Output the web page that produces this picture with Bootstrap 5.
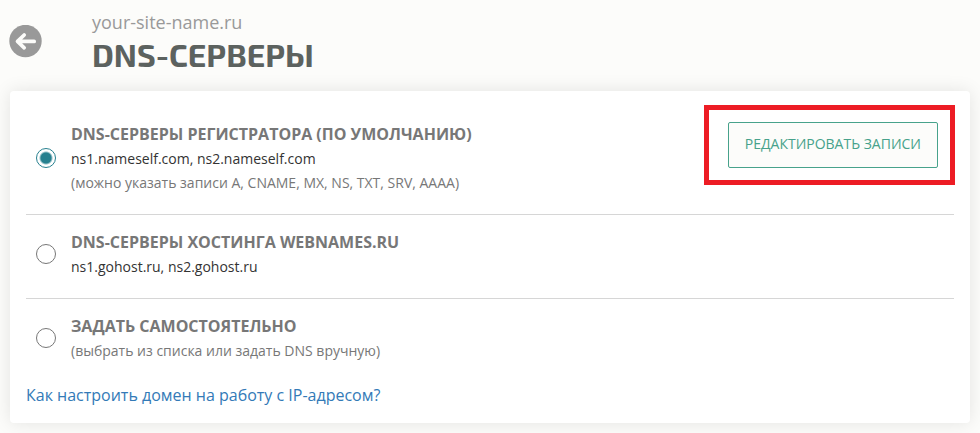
<!DOCTYPE html>
<html lang="ru">
<head>
<meta charset="utf-8">
<meta name="viewport" content="width=device-width, initial-scale=1">
<title>DNS-серверы</title>
<link href="https://cdn.jsdelivr.net/npm/bootstrap@5.3.0/dist/css/bootstrap.min.css" rel="stylesheet">
<style>
body { font-family: "Open Sans", "Noto Sans", sans-serif; font-size: 14px; line-height: 24px; color: #333; background: #fcfcfa; }
.page-head { padding: 10px 9px 17px; gap: 50px; }
.back-link { margin-top: 15px; }
.site-name { font-size: 18px; color: #999; }
.page-title { font-family: "Exo 2", Roboto, sans-serif; font-size: 32px; line-height: 40px; font-weight: 700; color: #5c625f; }
.dns-panel { margin: 0 10px 10px; padding: 16px; border-radius: 4px; box-shadow: 0 0 18px rgba(0, 0, 0, .1); }
.dns-option { padding: 15px 16px 19px 10px; border-bottom: 1px solid #d6d6d6; }
.dns-option:last-of-type { padding-bottom: 20px; border-bottom: 0; }
.dns-option .form-check-input { width: 20px; height: 20px; margin: 0 0 2px; border: 1px solid #777; background: #fff; }
.dns-option .form-check-input:checked { border-color: #26808f; background: radial-gradient(circle, #26808f 5px, #fff 7px); }
.dns-label { gap: 15px; cursor: pointer; }
.option-title { font-size: 16px; font-weight: 700; color: #777; margin-bottom: 1px; }
.option-note { color: #777; }
.btn-edit { padding: 9px 16px 11px; font-size: 14px; line-height: 24px; color: #47a28b; border: 1px solid #47a28b; border-radius: 2px; background: #fcfcfa; }
.btn-edit:hover { color: #fff; background: #47a28b; border-color: #47a28b; }
.highlight::after { content: ""; position: absolute; inset: -17px -17px -17px -24px; border: 5px solid #ed1c24; pointer-events: none; }
.help-link { font-size: 16px; color: #337ab7; }
</style>
</head>
<body>
<header class="page-head d-flex align-items-start">
  <a class="back-link d-flex" href="#" aria-label="Назад">
    <svg width="33" height="33" viewBox="0 0 33 33" aria-hidden="true"><circle cx="16.5" cy="16" r="16.200" fill="#999"/><path d="M15.200 10L8.500 16.400l6.700 6.400M9 16.400h16.200" fill="none" stroke="#fcfcfa" stroke-width="3.700" stroke-linecap="round" stroke-linejoin="round"/></svg>
  </a>
  <div>
    <div class="site-name">your-site-name.ru</div>
    <h1 class="page-title mb-0">DNS-СЕРВЕРЫ</h1>
  </div>
</header>
<main class="dns-panel bg-white">
  <form>
    <div class="dns-option d-flex align-items-start justify-content-between">
      <label class="dns-label d-flex align-items-center" for="dns-registrar">
        <input class="form-check-input flex-shrink-0" type="radio" name="dns" id="dns-registrar" checked>
        <span>
          <span class="option-title d-block">DNS-СЕРВЕРЫ РЕГИСТРАТОРА (ПО УМОЛЧАНИЮ)</span>
          <span class="d-block">ns1.nameself.com, ns2.nameself.com</span>
          <span class="option-note d-block">(можно указать записи A, CNAME, MX, NS, TXT, SRV, AAAA)</span>
        </span>
      </label>
      <div class="highlight position-relative flex-shrink-0">
        <button class="btn btn-edit" type="button">РЕДАКТИРОВАТЬ ЗАПИСИ</button>
      </div>
    </div>
    <div class="dns-option d-flex">
      <label class="dns-label d-flex align-items-center" for="dns-hosting">
        <input class="form-check-input flex-shrink-0" type="radio" name="dns" id="dns-hosting">
        <span>
          <span class="option-title d-block">DNS-СЕРВЕРЫ ХОСТИНГА WEBNAMES.RU</span>
          <span class="d-block">ns1.gohost.ru, ns2.gohost.ru</span>
        </span>
      </label>
    </div>
    <div class="dns-option d-flex">
      <label class="dns-label d-flex align-items-center" for="dns-custom">
        <input class="form-check-input flex-shrink-0" type="radio" name="dns" id="dns-custom">
        <span>
          <span class="option-title d-block">ЗАДАТЬ САМОСТОЯТЕЛЬНО</span>
          <span class="option-note d-block">(выбрать из списка или задать DNS вручную)</span>
        </span>
      </label>
    </div>
  </form>
  <a class="help-link d-block text-decoration-none" href="#">Как настроить домен на работу с IP-адресом?</a>
</main>
<script src="https://cdn.jsdelivr.net/npm/bootstrap@5.3.0/dist/js/bootstrap.bundle.min.js"></script>
</body>
</html>
